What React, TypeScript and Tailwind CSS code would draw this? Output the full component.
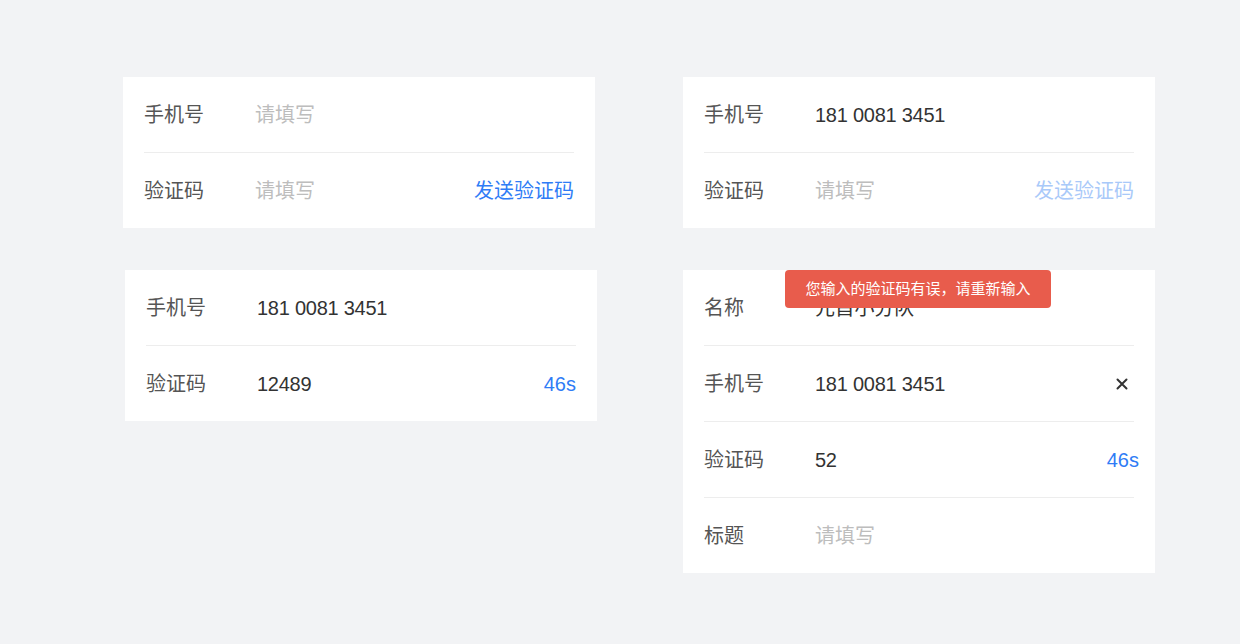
const font = { fontFamily: '"Liberation Sans", "Noto Sans CJK SC", sans-serif' }

type Row = {
  label: string
  value?: string
  placeholder?: string
  action?: 'send' | 'send-disabled' | 'count' | 'clear'
}

function ClearIcon() {
  return (
    <svg viewBox="0 0 12 12" className="size-3 text-[#333]">
      <path d="M1.5 1.5l9 9M10.5 1.5l-9 9" stroke="currentColor" strokeWidth="2" strokeLinecap="round" />
    </svg>
  )
}

function FormRow({ row, last, countOffset }: { row: Row; last: boolean; countOffset?: boolean }) {
  return (
    <div className={last ? '' : 'border-b border-[#ededed]'}>
      <div className="flex h-[75px] items-center">
        <span className="w-[111px] shrink-0 text-[20px] text-[#555]">{row.label}</span>
        <span
          className={
            'flex-1 text-[20px] ' + (row.value ? 'text-[#333] tracking-[-0.25px]' : 'text-[#bdbdbd]')
          }
        >
          {row.value ?? row.placeholder}
        </span>
        {row.action === 'send' && <span className="text-[20px] text-[#2f7cf6]">发送验证码</span>}
        {row.action === 'send-disabled' && <span className="text-[20px] text-[#a9c9f9]">发送验证码</span>}
        {row.action === 'count' && (
          <span className={'text-[20px] text-[#2f7cf6] ' + (countOffset ? '-mr-[5px]' : '')}>46s</span>
        )}
        {row.action === 'clear' && (
          <span className="mr-[6px] flex items-center">
            <ClearIcon />
          </span>
        )}
      </div>
    </div>
  )
}

function FormCard({ rows, countOffset, children }: { rows: Row[]; countOffset?: boolean; children?: React.ReactNode }) {
  return (
    <div className="relative w-[472px] bg-white px-[21px]">
      {rows.map((r, i) => (
        <FormRow key={i} row={r} last={i === rows.length - 1} countOffset={countOffset} />
      ))}
      {children}
    </div>
  )
}

export default function App() {
  return (
    <div style={font} className="h-[644px] w-[1240px] bg-[#f2f3f5]">
      <div className="grid grid-cols-[472px_472px] items-start gap-x-[88px] gap-y-[42px] pl-[123px] pt-[77px]">
        <FormCard
          rows={[
            { label: '手机号', placeholder: '请填写' },
            { label: '验证码', placeholder: '请填写', action: 'send' },
          ]}
        />
        <FormCard
          rows={[
            { label: '手机号', value: '181 0081 3451' },
            { label: '验证码', placeholder: '请填写', action: 'send-disabled' },
          ]}
        />
        <div className="ml-[2px]">
          <FormCard
            rows={[
              { label: '手机号', value: '181 0081 3451' },
              { label: '验证码', value: '12489', action: 'count' },
            ]}
          />
        </div>
        <FormCard
          countOffset
          rows={[
            { label: '名称', value: '元首小分队' },
            { label: '手机号', value: '181 0081 3451', action: 'clear' },
            { label: '验证码', value: '52', action: 'count' },
            { label: '标题', placeholder: '请填写' },
          ]}
        >
          <div className="absolute left-[102px] top-0 flex h-[38px] w-[266px] items-center justify-center rounded-[4px] bg-[#e85c4c] text-[15px] text-white">
            您输入的验证码有误，请重新输入
          </div>
        </FormCard>
      </div>
    </div>
  )
}
